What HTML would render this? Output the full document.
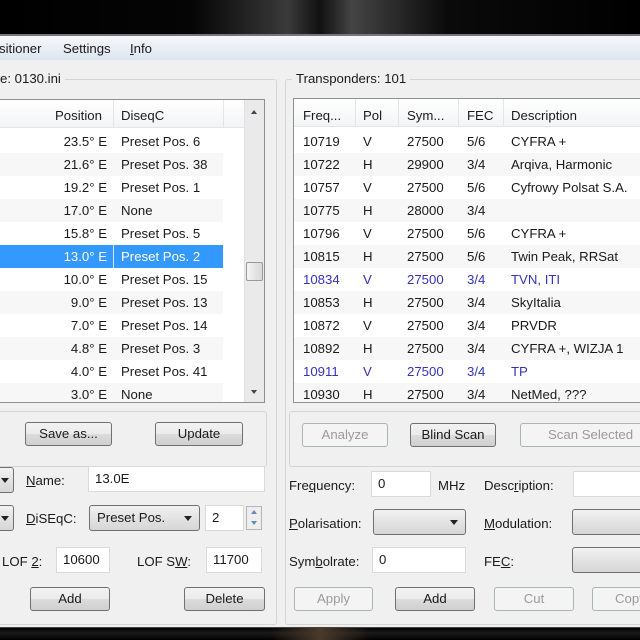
<!DOCTYPE html>
<html><head><meta charset="utf-8"><style>
*{box-sizing:border-box;margin:0;padding:0}
body{width:640px;height:640px;overflow:hidden;background:#f0f0f0;font-family:"Liberation Sans",sans-serif;font-size:13.2px;color:#1a1a1a;position:relative}
.a{position:absolute;white-space:nowrap}
.top{left:0;top:0;width:640px;height:36px;background:linear-gradient(90deg,#000 0%,#050505 30%,#3a3a3a 45%,#111 50%,#444 55%,#0a0a0a 70%,#000 100%);border-bottom:2px solid #777}
.menu{left:0;top:36px;width:640px;height:24px;background:linear-gradient(#f6f8fb,#dde5ef);}
.grp{border:1px solid #d5d5d5;border-radius:3px}
.list{background:#fff;border:1px solid #8e8f8f;overflow:hidden}
.hdr{position:absolute;top:0;height:28px;background:linear-gradient(#fff,#f3f4f6);border-bottom:1px solid #e5e5e5;width:100%}
.btn{position:absolute;height:24px;border:1px solid #707070;border-radius:3px;background:linear-gradient(#f2f2f2 0%,#ebebeb 50%,#dcdcdc 51%,#cfcfcf 100%);text-align:center;line-height:22px}
.dis{border-color:#adb2b5;background:#f4f4f4;color:#9a9a9a}
.tb{position:absolute;height:26px;background:#fff;border:1px solid #dadada;padding-left:6px;line-height:24px}
.cb{position:absolute;height:26px;border:1px solid #707070;border-radius:3px;background:linear-gradient(#f2f2f2,#e3e3e3 50%,#d6d6d6);padding-left:7px;line-height:24px}
.arr{position:absolute;right:7px;top:10px;width:0;height:0;border-left:4px solid transparent;border-right:4px solid transparent;border-top:5px solid #222}
.row{position:absolute;left:0;width:100%;height:23px;line-height:23px}
.alt{background:#f7f7f7}
.c{position:absolute;top:0}
.p{position:absolute;top:0;left:0;width:108px;text-align:right}
.blue{color:#3333bb}
u{text-decoration:underline}
</style></head><body>
<div class="a top"></div>
<div class="a menu"></div>
<div class="a" style="left:-1px;top:41px">sitioner</div>
<div class="a" style="left:63px;top:41px">Settings</div>
<div class="a" style="left:130px;top:41px"><u>I</u>nfo</div>

<!-- left group -->
<div class="a grp" style="left:-5px;top:79px;width:282px;height:546px"></div>
<div class="a" style="left:0;top:71px;background:#f0f0f0;padding-right:4px">e: 0130.ini</div>
<div class="a list" style="left:-2px;top:99px;width:267px;height:304px">
 <div class="hdr"></div>
 <div class="a" style="left:114px;top:0;width:1px;height:28px;background:#e5e5e5"></div>
 <div class="a" style="left:224px;top:0;width:1px;height:28px;background:#e5e5e5"></div>
 <div class="a" style="left:56px;top:8px">Position</div>
 <div class="a" style="left:122px;top:8px">DiseqC</div>
 <div class="a" style="left:245px;top:0;width:21px;height:302px;background:#eaeaea;border-left:1px solid #e0e0e0"></div>
 <div class="a" style="left:252px;top:10px;border-left:3px solid transparent;border-right:3px solid transparent;border-bottom:4px solid #444"></div>
 <div class="a" style="left:252px;top:290px;border-left:3px solid transparent;border-right:3px solid transparent;border-top:4px solid #444"></div>
 <div class="a" style="left:247px;top:162px;width:17px;height:19px;border:1px solid #999;border-radius:2px;background:linear-gradient(90deg,#f4f4f4,#d8d8d8)"></div>
 <div class="a" style="left:0;top:30px;width:245px;height:280px">
  <div class="row" style="top:0"><span class="p">23.5° E</span><span class="c" style="left:122px">Preset Pos. 6</span></div>
  <div class="row alt" style="top:23px;width:224px"><span class="p">21.6° E</span><span class="c" style="left:122px">Preset Pos. 38</span></div>
  <div class="row" style="top:46px"><span class="p">19.2° E</span><span class="c" style="left:122px">Preset Pos. 1</span></div>
  <div class="row alt" style="top:69px;width:224px"><span class="p">17.0° E</span><span class="c" style="left:122px">None</span></div>
  <div class="row" style="top:92px"><span class="p">15.8° E</span><span class="c" style="left:122px">Preset Pos. 5</span></div>
  <div class="row" style="top:115px;width:224px;background:#3399ff;color:#fff"><span class="c" style="left:114px;width:1px;height:23px;background:#cfe4ff"></span><span class="p">13.0° E</span><span class="c" style="left:122px">Preset Pos. 2</span></div>
  <div class="row" style="top:138px"><span class="p">10.0° E</span><span class="c" style="left:122px">Preset Pos. 15</span></div>
  <div class="row alt" style="top:161px;width:224px"><span class="p">9.0° E</span><span class="c" style="left:122px">Preset Pos. 13</span></div>
  <div class="row" style="top:184px"><span class="p">7.0° E</span><span class="c" style="left:122px">Preset Pos. 14</span></div>
  <div class="row alt" style="top:207px;width:224px"><span class="p">4.8° E</span><span class="c" style="left:122px">Preset Pos. 3</span></div>
  <div class="row" style="top:230px"><span class="p">4.0° E</span><span class="c" style="left:122px">Preset Pos. 41</span></div>
  <div class="row alt" style="top:253px;width:224px"><span class="p">3.0° E</span><span class="c" style="left:122px">None</span></div>
 </div>
</div>
<div class="a grp" style="left:-5px;top:411px;width:272px;height:56px"></div>
<div class="btn" style="left:25px;top:422px;width:87px">Save as...</div>
<div class="btn" style="left:155px;top:422px;width:88px">Update</div>

<div class="cb" style="left:-10px;top:467px;width:24px;padding:0"><div class="arr" style="right:4px"></div></div>
<div class="a" style="left:26px;top:473px"><u>N</u>ame:</div>
<div class="tb" style="left:88px;top:466px;width:177px">13.0E</div>
<div class="cb" style="left:-10px;top:505px;width:24px;padding:0"><div class="arr" style="right:4px"></div></div>
<div class="a" style="left:26px;top:511px"><u>D</u>iSEqC:</div>
<div class="cb" style="left:89px;top:505px;width:111px">Preset Pos.<div class="arr"></div></div>
<div class="tb" style="left:205px;top:505px;width:39px">2</div>
<div class="a" style="left:246px;top:506px;width:16px;height:24px;border:1px solid #b5b5b5;background:#eee"></div>
<div class="a" style="left:251px;top:510px;border-left:3px solid transparent;border-right:3px solid transparent;border-bottom:4px solid #6688bb"></div>
<div class="a" style="left:251px;top:521px;border-left:3px solid transparent;border-right:3px solid transparent;border-top:4px solid #6688bb"></div>
<div class="a" style="left:2px;top:554px">LOF <u>2</u>:</div>
<div class="tb" style="left:56px;top:547px;width:54px">10600</div>
<div class="a" style="left:137px;top:554px">LOF S<u>W</u>:</div>
<div class="tb" style="left:206px;top:547px;width:56px">11700</div>
<div class="btn" style="left:30px;top:587px;width:80px">Add</div>
<div class="btn" style="left:184px;top:587px;width:81px">Delete</div>

<!-- right group -->
<div class="a grp" style="left:285px;top:79px;width:370px;height:546px"></div>
<div class="a" style="left:292px;top:71px;background:#f0f0f0;padding:0 4px">Transponders: 101</div>
<div class="a list" style="left:293px;top:98px;width:360px;height:305px">
 <div class="hdr"></div>
 <div class="a" style="left:61px;top:0;width:1px;height:28px;background:#e5e5e5"></div>
 <div class="a" style="left:104px;top:0;width:1px;height:28px;background:#e5e5e5"></div>
 <div class="a" style="left:164px;top:0;width:1px;height:28px;background:#e5e5e5"></div>
 <div class="a" style="left:209px;top:0;width:1px;height:28px;background:#e5e5e5"></div>
 <div class="a" style="left:9px;top:9px">Freq...</div>
 <div class="a" style="left:69px;top:9px">Pol</div>
 <div class="a" style="left:113px;top:9px">Sym...</div>
 <div class="a" style="left:173px;top:9px">FEC</div>
 <div class="a" style="left:217px;top:9px">Description</div>
 <div class="a" style="left:0;top:31px;width:360px;height:280px">
  <div class="row"           style="top:0"><span class="c" style="left:9px">10719</span><span class="c" style="left:69px">V</span><span class="c" style="left:113px">27500</span><span class="c" style="left:173px">5/6</span><span class="c" style="left:217px">CYFRA +</span></div>
  <div class="row alt"       style="top:23px"><span class="c" style="left:9px">10722</span><span class="c" style="left:69px">H</span><span class="c" style="left:113px">29900</span><span class="c" style="left:173px">3/4</span><span class="c" style="left:217px">Arqiva, Harmonic</span></div>
  <div class="row"           style="top:46px"><span class="c" style="left:9px">10757</span><span class="c" style="left:69px">V</span><span class="c" style="left:113px">27500</span><span class="c" style="left:173px">5/6</span><span class="c" style="left:217px">Cyfrowy Polsat S.A.</span></div>
  <div class="row alt"       style="top:69px"><span class="c" style="left:9px">10775</span><span class="c" style="left:69px">H</span><span class="c" style="left:113px">28000</span><span class="c" style="left:173px">3/4</span></div>
  <div class="row"           style="top:92px"><span class="c" style="left:9px">10796</span><span class="c" style="left:69px">V</span><span class="c" style="left:113px">27500</span><span class="c" style="left:173px">5/6</span><span class="c" style="left:217px">CYFRA +</span></div>
  <div class="row alt"       style="top:115px"><span class="c" style="left:9px">10815</span><span class="c" style="left:69px">H</span><span class="c" style="left:113px">27500</span><span class="c" style="left:173px">5/6</span><span class="c" style="left:217px">Twin Peak, RRSat</span></div>
  <div class="row blue"      style="top:138px"><span class="c" style="left:9px">10834</span><span class="c" style="left:69px">V</span><span class="c" style="left:113px">27500</span><span class="c" style="left:173px">3/4</span><span class="c" style="left:217px">TVN, ITI</span></div>
  <div class="row alt"       style="top:161px"><span class="c" style="left:9px">10853</span><span class="c" style="left:69px">H</span><span class="c" style="left:113px">27500</span><span class="c" style="left:173px">3/4</span><span class="c" style="left:217px">SkyItalia</span></div>
  <div class="row"           style="top:184px"><span class="c" style="left:9px">10872</span><span class="c" style="left:69px">V</span><span class="c" style="left:113px">27500</span><span class="c" style="left:173px">3/4</span><span class="c" style="left:217px">PRVDR</span></div>
  <div class="row alt"       style="top:207px"><span class="c" style="left:9px">10892</span><span class="c" style="left:69px">H</span><span class="c" style="left:113px">27500</span><span class="c" style="left:173px">3/4</span><span class="c" style="left:217px">CYFRA +, WIZJA 1</span></div>
  <div class="row blue"      style="top:230px"><span class="c" style="left:9px">10911</span><span class="c" style="left:69px">V</span><span class="c" style="left:113px">27500</span><span class="c" style="left:173px">3/4</span><span class="c" style="left:217px">TP</span></div>
  <div class="row alt"       style="top:253px"><span class="c" style="left:9px">10930</span><span class="c" style="left:69px">H</span><span class="c" style="left:113px">27500</span><span class="c" style="left:173px">3/4</span><span class="c" style="left:217px">NetMed, ???</span></div>
 </div>
</div>
<div class="a grp" style="left:289px;top:411px;width:360px;height:56px"></div>
<div class="btn dis" style="left:302px;top:423px;width:86px">Analyze</div>
<div class="btn" style="left:410px;top:423px;width:86px">Blind Scan</div>
<div class="btn dis" style="left:520px;top:423px;width:130px;text-align:left;padding-left:27px">Scan Selected</div>

<div class="a" style="left:289px;top:478px">Fre<u>q</u>uency:</div>
<div class="tb" style="left:371px;top:471px;width:60px">0</div>
<div class="a" style="left:438px;top:478px">MHz</div>
<div class="a" style="left:484px;top:478px">Desc<u>r</u>iption:</div>
<div class="tb" style="left:573px;top:471px;width:80px"></div>
<div class="a" style="left:289px;top:516px"><u>P</u>olarisation:</div>
<div class="cb" style="left:373px;top:509px;width:93px"><div class="arr"></div></div>
<div class="a" style="left:484px;top:516px"><u>M</u>odulation:</div>
<div class="cb" style="left:572px;top:509px;width:80px"></div>
<div class="a" style="left:289px;top:554px">Sym<u>b</u>olrate:</div>
<div class="tb" style="left:372px;top:547px;width:94px">0</div>
<div class="a" style="left:484px;top:554px">FE<u>C</u>:</div>
<div class="cb" style="left:572px;top:547px;width:80px"></div>
<div class="btn dis" style="left:294px;top:587px;width:79px">Apply</div>
<div class="btn" style="left:395px;top:587px;width:80px">Add</div>
<div class="btn dis" style="left:494px;top:587px;width:80px">Cut</div>
<div class="btn dis" style="left:592px;top:587px;width:80px;text-align:left;padding-left:22px">Copy</div>

<div class="a" style="left:0;top:627px;width:640px;height:13px;background:linear-gradient(#000,#1a1a1a 40%,#000);border-top:1px solid #444"></div>
<div class="a" style="left:270px;top:627px;width:100px;height:13px;background:linear-gradient(90deg,transparent,#4a3a2a,transparent)"></div>
</body></html>
